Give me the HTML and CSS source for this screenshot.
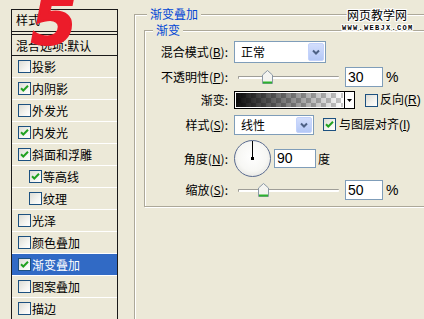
FILE: index.html
```html
<!DOCTYPE html>
<html lang="zh-CN">
<head>
<meta charset="utf-8">
<title>图层样式 - 渐变叠加</title>
<link rel="stylesheet" href="styles.css">
</head>
<body>
<div class="app">
  <aside class="sidebar">
    <div class="list">
      <div class="list-head">样式</div>
      <div class="list-default">混合选项:默认</div>
      <div class="item"><span class="cb"></span>投影</div>
      <div class="item"><span class="cb on"><svg width="9" height="9" viewBox="0 0 9 9"><path d="M1 4.2 L3.3 6.5 L8 1.8" fill="none" stroke="#21a121" stroke-width="2"/></svg></span>内阴影</div>
      <div class="item"><span class="cb"></span>外发光</div>
      <div class="item"><span class="cb on"><svg width="9" height="9" viewBox="0 0 9 9"><path d="M1 4.2 L3.3 6.5 L8 1.8" fill="none" stroke="#21a121" stroke-width="2"/></svg></span>内发光</div>
      <div class="item"><span class="cb on"><svg width="9" height="9" viewBox="0 0 9 9"><path d="M1 4.2 L3.3 6.5 L8 1.8" fill="none" stroke="#21a121" stroke-width="2"/></svg></span>斜面和浮雕</div>
      <div class="item sub"><span class="cb on"><svg width="9" height="9" viewBox="0 0 9 9"><path d="M1 4.2 L3.3 6.5 L8 1.8" fill="none" stroke="#21a121" stroke-width="2"/></svg></span>等高线</div>
      <div class="item sub"><span class="cb"></span>纹理</div>
      <div class="item"><span class="cb"></span>光泽</div>
      <div class="item"><span class="cb"></span>颜色叠加</div>
      <div class="item sel"><span class="cb on"><svg width="9" height="9" viewBox="0 0 9 9"><path d="M1 4.2 L3.3 6.5 L8 1.8" fill="none" stroke="#21a121" stroke-width="2"/></svg></span>渐变叠加</div>
      <div class="item"><span class="cb"></span>图案叠加</div>
      <div class="item"><span class="cb"></span>描边</div>
    </div>
  </aside>
  <main class="main">
    <div class="group outer">
      <div class="legend">渐变叠加</div>
      <div class="group inner">
        <div class="legend">渐变</div>
        <div class="form">
          <div class="lbl">混合模式(<u>B</u>):</div>
          <div class="ctl">
            <div class="select w1"><span>正常</span><span class="btn"><svg width="14" height="16" viewBox="0 0 14 16"><path d="M4 6.5 L7 9.5 L10 6.5" fill="none" stroke="#4d6185" stroke-width="2"/></svg></span></div>
          </div>

          <div class="lbl">不透明性(<u>P</u>):</div>
          <div class="ctl">
            <div class="slider"><div class="track"></div><svg class="thumb" style="left:24px" width="11" height="14" viewBox="0 0 11 14"><path d="M0.5 5 L5.5 0.5 L10.5 5 L10.5 13.5 L0.5 13.5 Z" fill="#f4f4f0" stroke="#8b98a6"/><path d="M1 12.5 H10" stroke="#2cb22c" stroke-width="2"/></svg></div>
            <div class="num">30</div>
            <span class="pct">%</span>
          </div>

          <div class="lbl">渐变:</div>
          <div class="ctl">
            <div class="grad"><div class="grad-fill"></div><div class="grad-arrow"><svg width="5" height="3" viewBox="0 0 5 3"><path d="M0 0 H5 L2.5 3 Z" fill="#000"/></svg></div></div>
            <span class="cb big"></span><span class="cbl">反向(<u>R</u>)</span>
          </div>

          <div class="lbl">样式(<u>S</u>):</div>
          <div class="ctl">
            <div class="select w2"><span>线性</span><span class="btn"><svg width="14" height="14" viewBox="0 0 14 14"><path d="M4 5.5 L7 8.5 L10 5.5" fill="none" stroke="#4d6185" stroke-width="2"/></svg></span></div>
            <span class="cb big on align"><svg width="9" height="9" viewBox="0 0 9 9"><path d="M1 4.2 L3.3 6.5 L8 1.8" fill="none" stroke="#21a121" stroke-width="2"/></svg></span><span class="cbl">与图层对齐(<u>I</u>)</span>
          </div>

          <div class="lbl">角度(<u>N</u>):</div>
          <div class="ctl">
            <div class="dial"><span class="needle"></span><span class="dot"></span></div>
            <div class="num angle">90</div>
            <span class="deg">度</span>
          </div>

          <div class="lbl">缩放(<u>S</u>):</div>
          <div class="ctl">
            <div class="slider"><div class="track"></div><svg class="thumb" style="left:20px" width="11" height="14" viewBox="0 0 11 14"><path d="M0.5 5 L5.5 0.5 L10.5 5 L10.5 13.5 L0.5 13.5 Z" fill="#f4f4f0" stroke="#8b98a6"/><path d="M1 12.5 H10" stroke="#2cb22c" stroke-width="2"/></svg></div>
            <div class="num">50</div>
            <span class="pct">%</span>
          </div>
        </div>
      </div>
    </div>
  </main>
</div>
<div class="five">5</div>
<div class="wm1">网页教学网</div>
<div class="wm2">WWW.WEBJX.COM</div>
</body>
</html>
```

FILE: styles.css
```css
* { box-sizing: border-box; }
html, body { margin: 0; padding: 0; }
body {
  width: 424px;
  height: 319px;
  overflow: hidden;
  position: relative;
  background: #ece9d8;
  font-family: "Noto Sans CJK SC", "Liberation Sans", sans-serif;
  font-size: 12px;
  line-height: 14px;
  color: #000;
}
u { text-decoration: underline; text-underline-offset: 1px; }

.app { display: flex; height: 319px; }

/* left list */
.sidebar { flex: 0 0 134px; padding: 9px 0 0 11px; }
.list {
  width: 107px;
  height: 330px;
  border: 1px solid #1a1a1a;
}
.list-head {
  height: 22px;
  padding: 3px 0 0 4px;
  border-bottom: 1px solid #1a1a1a;
}
.list-default {
  height: 22px;
  margin-top: 2px;
  padding: 4px 0 0 4px;
  border-top: 1px solid #1a1a1a;
  border-bottom: 1px solid #1a1a1a;
}
.item {
  display: flex;
  align-items: center;
  height: 22px;
  padding-left: 6px;
  border-bottom: 1px solid #fff;
}
.item.sub { padding-left: 17px; }
.item.sel { background: #316ac5; color: #fff; }

.cb {
  flex: none;
  width: 13px;
  height: 13px;
  margin-right: 1px;
  border: 1px solid #1c5180;
  background: linear-gradient(135deg, #dcdcd5 0%, #f4f4f0 60%, #fff 100%);
  display: flex;
  align-items: center;
  justify-content: center;
}
.cb svg { display: block; }

/* right groups */
.main { flex: 1; min-width: 0; padding-top: 14px; }
.group {
  border: 1px solid #aca899;
  box-shadow: inset 1px 1px 0 #fff, 1px 1px 0 #fff;
}
.outer { width: 330px; height: 400px; }
.inner { width: 320px; margin: 9px 0 0 9px; padding-bottom: 3px; }
.legend {
  width: max-content;
  margin-top: -8px;
  padding: 0 3px;
  background: #ece9d8;
  color: #0046d5;
  line-height: 14px;
}
.outer > .legend { margin-left: 12px; }
.inner > .legend { margin-left: 8px; }

.form {
  display: grid;
  grid-template-columns: 83px auto;
  grid-template-rows: 22px 28px 18px 31px 37px 26px;
  column-gap: 6px;
  align-items: center;
  margin-top: 4px;
}
.lbl { text-align: right; white-space: nowrap; }
.ctl { display: flex; align-items: center; white-space: nowrap; }

.select {
  display: flex;
  align-items: center;
  justify-content: space-between;
  border: 1px solid #7f9db9;
  background: #fff;
  padding: 0 1px 0 6px;
}
.select.w1 { width: 92px; height: 22px; }
.select.w2 { width: 80px; height: 20px; }
.btn {
  display: flex;
  align-items: center;
  justify-content: center;
  width: 16px;
  border: 1px solid #c3d2fb;
  border-radius: 2px;
  background: linear-gradient(#d3defc, #b4c8f6);
}
.w1 .btn { height: 18px; }
.w2 .btn { height: 16px; }

.slider { position: relative; width: 101px; height: 14px; margin-left: 4px; }
.track {
  margin-top: 6px;
  height: 3px;
  border-top: 1px solid #9f9e98;
  border-left: 1px solid #9f9e98;
  background: #fff;
  border-radius: 1px;
}
.thumb { position: absolute; top: 0; display: block; }

.num {
  width: 38px;
  height: 20px;
  margin-left: 6px;
  padding-left: 2px;
  border: 1px solid #7f9db9;
  background: #fff;
  font-family: "Liberation Sans", sans-serif;
  font-size: 14px;
  line-height: 18px;
}
.num.angle { width: 42px; height: 19px; margin-left: 3px; line-height: 17px; }
.pct { margin-left: 3px; font-family: "Liberation Sans", sans-serif; font-size: 14px; }
.deg { margin-left: 2px; }

.grad {
  display: flex;
  width: 121px;
  height: 18px;
  border: 1px solid #000;
  background: #fff;
}
.grad-fill {
  flex: 1;
  margin: 1px;
  background:
    linear-gradient(to right, rgba(0,0,0,0.95), rgba(0,0,0,0)),
    repeating-conic-gradient(#c8c8c8 0 25%, #fff 0 50%) 0 0 / 10px 10px;
}
.grad-arrow {
  flex: none;
  width: 10px;
  border-left: 1px solid #000;
  display: flex;
  align-items: center;
  justify-content: center;
}
.grad-arrow svg { display: block; }
.cb.big { margin-left: 10px; margin-right: 2px; }
.cb.big.align { margin-left: 9px; margin-right: 3px; }
.cbl { font-family: "Liberation Sans", "Noto Sans CJK SC", sans-serif; }

.dial {
  position: relative;
  flex: none;
  width: 37px;
  height: 37px;
  border-radius: 50%;
  border: 1px solid #5a6b90;
  background: radial-gradient(circle at 50% 45%, #ffffff 0%, #f7f7f4 55%, #d9d9d3 100%);
}
.needle { position: absolute; left: 17px; top: 0; width: 1px; height: 17px; background: #000; }
.dot { position: absolute; left: 16px; top: 16px; width: 3px; height: 3px; background: #000; }

/* overlays */
.five {
  position: absolute;
  left: 31px;
  top: -10px;
  font-family: "DejaVu Sans", sans-serif;
  font-weight: bold;
  font-style: italic;
  font-size: 66px;
  line-height: 64px;
  color: #ec1c2a;
  -webkit-text-stroke: 2px #ec1c2a;
}
.wm1, .wm2 {
  position: absolute;
  color: #000;
  text-shadow: 1px 0 #fff, -1px 0 #fff, 0 1px #fff, 0 -1px #fff,
               1px 1px #fff, -1px -1px #fff, 1px -1px #fff, -1px 1px #fff;
}
.wm1 { left: 347px; top: 9px; font-size: 12px; line-height: 12px; }
.wm2 {
  left: 342px;
  top: 25px;
  font-family: "Liberation Mono", monospace;
  font-weight: bold;
  font-size: 7px;
  line-height: 7px;
  letter-spacing: 1.3px;
}
```
